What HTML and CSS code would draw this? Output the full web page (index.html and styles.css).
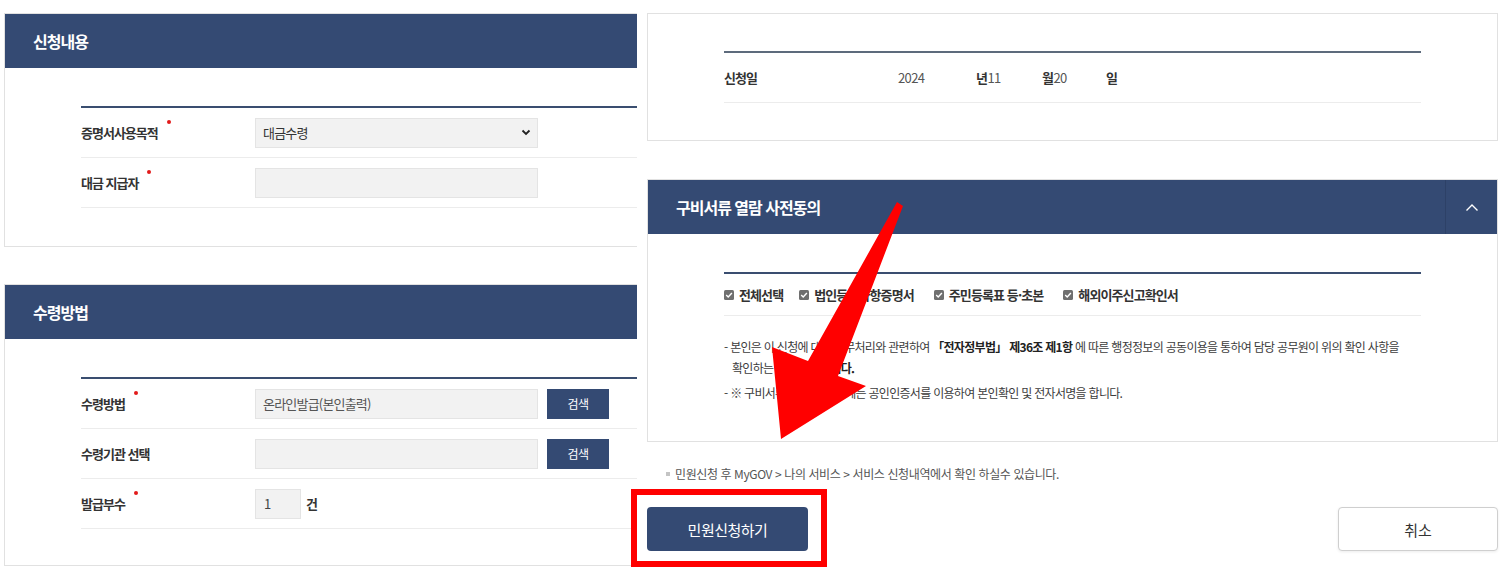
FILE: index.html
```html
<!DOCTYPE html>
<html lang="ko">
<head>
<meta charset="utf-8">
<title>민원신청</title>
<link rel="stylesheet" href="styles.css">
</head>
<body>
<div class="page">
  <div class="col-left">
    <section class="panel">
      <h2 class="panel-head"><span class="panel-title">신청내용</span></h2>
      <div class="panel-body">
        <div class="form-table">
          <div class="row">
            <div class="label req">증명서사용목적</div>
            <div class="field">
              <div class="input select"><span>대금수령</span>
                <svg class="sel-chev" width="10" height="7" viewBox="0 0 10 7"><path d="M1.5 1.5 L5 5 L8.5 1.5" fill="none" stroke="#222" stroke-width="1.8"/></svg>
              </div>
            </div>
          </div>
          <div class="row">
            <div class="label req">대금 지급자</div>
            <div class="field"><div class="input"></div></div>
          </div>
        </div>
      </div>
    </section>

    <section class="panel panel-receive">
      <h2 class="panel-head"><span class="panel-title">수령방법</span></h2>
      <div class="panel-body">
        <div class="form-table">
          <div class="row">
            <div class="label req">수령방법</div>
            <div class="field">
              <div class="input muted">온라인발급(본인출력)</div>
              <button class="btn-search">검색</button>
            </div>
          </div>
          <div class="row">
            <div class="label">수령기관 선택</div>
            <div class="field">
              <div class="input"></div>
              <button class="btn-search">검색</button>
            </div>
          </div>
          <div class="row">
            <div class="label req">발급부수</div>
            <div class="field field-count">
              <div class="input input-count">1</div>
              <span class="unit">건</span>
            </div>
          </div>
        </div>
      </div>
    </section>
  </div>

  <div class="col-right">
    <section class="panel panel-date">
      <div class="panel-body">
        <div class="form-table form-table-grey">
          <div class="row">
            <div class="label">신청일</div>
            <div class="date">
              <span class="d-year">2024</span>
              <span class="d-month"><b>년</b>11</span>
              <span class="d-day"><b>월</b>20</span>
              <b>일</b>
            </div>
          </div>
        </div>
      </div>
    </section>

    <section class="panel panel-consent">
      <h2 class="panel-head">
        <span class="panel-title">구비서류 열람 사전동의</span>
        <span class="toggle">
          <svg width="14" height="9" viewBox="0 0 14 9"><path d="M1.5 7.5 L7 2 L12.5 7.5" fill="none" stroke="#fff" stroke-width="1.4"/></svg>
        </span>
      </h2>
      <div class="panel-body consent-body">
        <div class="form-table">
          <div class="checks">
            <label class="chk"><svg width="10" height="10" viewBox="0 0 10 10"><rect width="10" height="10" rx="1.5" fill="#6f6f6f"/><path d="M2.2 5.1 L4.2 7 L7.9 3" fill="none" stroke="#fff" stroke-width="1.4"/></svg>전체선택</label>
            <label class="chk"><svg width="10" height="10" viewBox="0 0 10 10"><rect width="10" height="10" rx="1.5" fill="#6f6f6f"/><path d="M2.2 5.1 L4.2 7 L7.9 3" fill="none" stroke="#fff" stroke-width="1.4"/></svg>법인등기사항증명서</label>
            <label class="chk"><svg width="10" height="10" viewBox="0 0 10 10"><rect width="10" height="10" rx="1.5" fill="#6f6f6f"/><path d="M2.2 5.1 L4.2 7 L7.9 3" fill="none" stroke="#fff" stroke-width="1.4"/></svg>주민등록표 등·초본</label>
            <label class="chk"><svg width="10" height="10" viewBox="0 0 10 10"><rect width="10" height="10" rx="1.5" fill="#6f6f6f"/><path d="M2.2 5.1 L4.2 7 L7.9 3" fill="none" stroke="#fff" stroke-width="1.4"/></svg>해외이주신고확인서</label>
          </div>
        </div>
        <div class="consent-text">
          <p>- 본인은 이 신청에 대한 업무처리와 관련하여 <b>「전자정부법」 제36조 제1항</b> 에 따른 행정정보의 공동이용을 통하여 담당 공무원이 위의 확인 사항을<br>확인하는 것에 <b>동의합니다.</b></p>
          <p>- ※ 구비서류 열람 동의 시에는 공인인증서를 이용하여 본인확인 및 전자서명을 합니다.</p>
        </div>
      </div>
    </section>

    <p class="notice"><span class="bullet"></span>민원신청 후 MyGOV &gt; 나의 서비스 &gt; 서비스 신청내역에서 확인 하실수 있습니다.</p>

    <div class="actions">
      <button class="btn-primary">민원신청하기</button>
      <button class="btn-cancel">취소</button>
    </div>
  </div>
</div>

<svg class="annotation" width="1500" height="575" viewBox="0 0 1500 575">
  <polygon points="897,202 903,206 838,376 866,386 781,439 772,347 808,361" fill="#ff0000"/>
  <rect x="634" y="492" width="190" height="72" fill="none" stroke="#ff0000" stroke-width="6"/>
</svg>
</body>
</html>
```

FILE: styles.css
```css
* { box-sizing: border-box; margin: 0; padding: 0; }

body {
  width: 1500px;
  height: 575px;
  overflow: hidden;
  position: relative;
  background: #fff;
  color: #333;
  font-family: "Noto Sans CJK KR", "Noto Sans", sans-serif;
}

.page {
  display: flex;
  align-items: flex-start;
  gap: 10px;
  padding: 13px 0 0 4px;
}

.col-left {
  width: 633px;
  overflow: hidden;
  display: flex;
  flex-direction: column;
  gap: 37px;
}
.col-left .panel { width: 851px; }

.col-right {
  width: 851px;
  display: flex;
  flex-direction: column;
}

.panel {
  border: 1px solid #e1e1e1;
  background: #fff;
}

.panel-head {
  height: 54px;
  background: #344a73;
  color: #fff;
  display: flex;
  align-items: center;
  justify-content: space-between;
  padding-left: 28px;
  font-size: 16px;
  font-weight: 700;
  letter-spacing: -1px;
}

.toggle {
  width: 52px;
  height: 54px;
  border-left: 1px solid #2d4167;
  display: flex;
  align-items: center;
  justify-content: center;
}

.panel-body { padding: 38px 76px 38px; }
.panel-receive .panel-body { padding-bottom: 36px; }
.panel-date .panel-body { padding: 37px 76px 37px; }

.form-table { border-top: 2px solid #3a4e70; }
.form-table-grey { border-top-color: #5d6b7c; }

.row {
  height: 50px;
  border-bottom: 1px solid #ececec;
  display: flex;
  align-items: center;
}

.label {
  width: 174px;
  flex: none;
  font-size: 13px;
  font-weight: 700;
  letter-spacing: -1px;
  color: #333;
}

.req::after {
  content: "";
  display: inline-block;
  width: 4px;
  height: 4px;
  border-radius: 50%;
  background: #e21a1a;
  vertical-align: top;
  margin-left: 9px;
  transform: translateY(-3px);
}

.field {
  display: flex;
  align-items: center;
  gap: 9px;
}

.input {
  width: 283px;
  height: 30px;
  background: #f2f2f2;
  border: 1px solid #e4e4e4;
  padding: 0 7px;
  display: flex;
  align-items: center;
  font-size: 13px;
  letter-spacing: -0.8px;
  color: #333;
}
.input.muted { color: #555; }

.select { justify-content: space-between; padding-right: 6px; }

.input-count { width: 46px; padding-left: 8px; color: #444; }
.field-count { gap: 5px; }
.unit { font-size: 13px; font-weight: 700; }

.btn-search {
  width: 62px;
  height: 30px;
  border: 0;
  background: #344a73;
  color: #fff;
  font-family: inherit;
  font-size: 12px;
  letter-spacing: -0.5px;
}

.date {
  display: flex;
  align-items: center;
  font-size: 13px;
  color: #555;
  letter-spacing: -0.6px;
}
.date b { color: #333; font-weight: 700; }
.d-year { width: 78px; }
.d-month { width: 66px; }
.d-day { width: 64px; }

.panel-consent { margin-top: 38px; }
.consent-body { padding-bottom: 34px; }

.checks {
  height: 42px;
  border-bottom: 1px solid #ececec;
  display: flex;
  align-items: center;
}

.chk {
  display: flex;
  align-items: center;
  gap: 5px;
  font-size: 13px;
  font-weight: 700;
  letter-spacing: -0.9px;
  color: #333;
  margin-right: 16px;
}
.chk:nth-child(2) { margin-right: 20px; }
.chk:nth-child(3) { margin-right: 20px; }

.consent-text {
  padding-top: 20px;
  font-size: 12px;
  line-height: 21px;
  letter-spacing: -0.7px;
  color: #3c3c3c;
}
.consent-text p {
  padding-left: 8px;
  text-indent: -8px;
  margin-bottom: 4px;
}
.consent-text b { color: #222; }

.notice {
  margin-top: 23px;
  padding-left: 19px;
  display: flex;
  align-items: center;
  gap: 5px;
  font-size: 12px;
  line-height: 18px;
  letter-spacing: -0.4px;
  color: #555;
}
.bullet {
  width: 4px;
  height: 4px;
  background: #c4c4c4;
}

.actions {
  margin-top: 24px;
  display: flex;
  justify-content: space-between;
}

.btn-primary {
  width: 161px;
  height: 44px;
  border: 0;
  border-radius: 4px;
  background: #344a73;
  color: #fff;
  font-family: inherit;
  font-size: 15px;
  letter-spacing: -0.5px;
}

.btn-cancel {
  width: 160px;
  height: 44px;
  border: 1px solid #cfcfcf;
  border-radius: 4px;
  background: #fff;
  color: #333;
  font-family: inherit;
  font-size: 15px;
  box-shadow: 0 1px 3px rgba(0, 0, 0, 0.08);
}

.annotation {
  position: absolute;
  top: 0;
  left: 0;
  pointer-events: none;
}
```
